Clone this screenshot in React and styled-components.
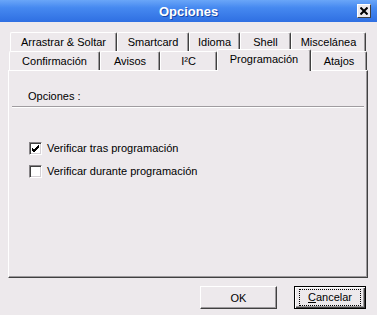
import React from 'react';
import styled, { createGlobalStyle } from 'styled-components';

const GlobalStyle = createGlobalStyle`
  html, body {
    margin: 0;
    padding: 0;
    background: #ede9ec;
  }
  body {
    font-family: 'Liberation Sans', Arial, sans-serif;
    font-size: 11px;
    color: #000;
  }
`;

const Window = styled.div`
  width: 377px;
  height: 315px;
  display: flex;
  flex-direction: column;
  background: #ede9ec;
  overflow: hidden;
`;

const TitleBar = styled.div`
  height: 22px;
  display: grid;
  grid-template-columns: 1fr auto 1fr;
  align-items: center;
  background: linear-gradient(#6aa6f8 0%, #4689f0 35%, #2f6fe2 100%);
`;

const Title = styled.div`
  grid-column: 2;
  color: #fff;
  font-weight: bold;
  font-size: 13px;
  text-shadow: 1px 1px 0 #1b47a8;
  padding-top: 1px;
`;

const CloseButton = styled.div`
  grid-column: 3;
  justify-self: end;
  margin-right: 6px;
  width: 14px;
  height: 14px;
  box-sizing: border-box;
  background: #ece9ec;
  border: 1px solid;
  border-color: #fff #404040 #404040 #fff;
  display: flex;
  align-items: center;
  justify-content: center;
`;

const Body = styled.div`
  padding: 10px 9px 0 8px;
  display: flex;
  flex-direction: column;
`;

const TabRow = styled.div`
  display: flex;
  height: 19px;
  margin-left: ${p => p.$indent}px;
  align-items: flex-end;
`;

const Tab = styled.div`
  width: ${p => p.$w}px;
  height: ${p => (p.$active ? 22 : 19)}px;
  margin-bottom: ${p => (p.$active ? -1 : 0)}px;
  box-sizing: border-box;
  border-top: 1px solid #fff;
  border-left: 1px solid #fff;
  border-right: 1px solid #404040;
  box-shadow: inset -1px 0 0 #9d9a9d;
  border-radius: 2px 2px 0 0;
  background: #ede9ec;
  display: flex;
  justify-content: center;
  align-items: flex-start;
  padding-top: 3px;
  white-space: nowrap;
  position: relative;
  z-index: ${p => (p.$active ? 2 : 1)};
`;

const Panel = styled.div`
  height: 208px;
  box-sizing: border-box;
  border-top: 1px solid #fff;
  border-left: 1px solid #fff;
  border-right: 1px solid #404040;
  border-bottom: 1px solid #404040;
  box-shadow: inset -1px -1px 0 #9d9a9d;
  padding: 19px 3px 0 3px;
  display: flex;
  flex-direction: column;
`;

const GroupLabel = styled.div`
  padding-left: 16px;
  line-height: 13px;
`;

const Separator = styled.div`
  height: 0;
  margin-top: 3px;
  border-top: 1px solid #a09ca0;
  border-bottom: 1px solid #fff;
`;

const Options = styled.div`
  margin-top: 34px;
  display: flex;
  flex-direction: column;
  gap: 10px;
  padding-left: 17px;
`;

const CheckRow = styled.label`
  display: flex;
  align-items: center;
  gap: 5px;
  line-height: 13px;
`;

const Box = styled.span`
  width: 13px;
  height: 13px;
  box-sizing: border-box;
  background: #fff;
  border: 1px solid;
  border-color: #878487 #fff #fff #878487;
  box-shadow: inset 1px 1px 0 #404040, inset -1px -1px 0 #d4d0d4;
  display: flex;
  align-items: center;
  justify-content: center;
`;

const ButtonBar = styled.div`
  display: flex;
  justify-content: flex-end;
  gap: 17px;
  padding: 8px 2px 0 0;
`;

const Button = styled.div`
  width: ${p => p.$w}px;
  height: 23px;
  box-sizing: border-box;
  background: #ede9ec;
  border: 1px solid;
  border-color: ${p => (p.$default ? '#000' : '#fff #404040 #404040 #fff')};
  box-shadow: ${p =>
    p.$default
      ? 'inset 1px 1px 0 #fff, inset -1px -1px 0 #404040, inset -2px -2px 0 #9d9a9d'
      : 'inset -1px -1px 0 #9d9a9d'};
  display: flex;
  align-items: center;
  justify-content: center;
`;

const Focus = styled.span`
  border: 1px dotted #000;
  padding: 1px 8px;
  line-height: 13px;
`;

const Check = () => (
  <svg width="9" height="9" viewBox="0 0 9 9">
    <path d="M1 4 L3 6 L8 1 M1 5 L3 7 L8 2 M1 6 L3 8 L8 3" stroke="#000" strokeWidth="1" fill="none" />
  </svg>
);

const row1 = [
  ['Arrastrar & Soltar', 107],
  ['Smartcard', 72],
  ['Idioma', 51],
  ['Shell', 51],
  ['Miscelánea', 75],
];

const row2 = [
  ['Confirmación', 91],
  ['Avisos', 60],
  ['I²C', 57],
  ['Programación', 94, true],
  ['Atajos', 56],
];

export default function App() {
  return (
    <Window>
      <GlobalStyle />
      <TitleBar>
        <Title>Opciones</Title>
        <CloseButton>
          <svg width="8" height="8" viewBox="0 0 8 8">
            <path d="M0.5 0.5 L7.5 7.5 M7.5 0.5 L0.5 7.5" stroke="#000" strokeWidth="2" />
          </svg>
        </CloseButton>
      </TitleBar>
      <Body>
        <TabRow $indent={2}>
          {row1.map(([t, w]) => (
            <Tab key={t} $w={w}>{t}</Tab>
          ))}
        </TabRow>
        <TabRow $indent={1}>
          {row2.map(([t, w, a]) => (
            <Tab key={t} $w={w} $active={a}>{t}</Tab>
          ))}
        </TabRow>
        <Panel>
          <GroupLabel>Opciones :</GroupLabel>
          <Separator />
          <Options>
            <CheckRow>
              <Box><Check /></Box>
              Verificar tras programación
            </CheckRow>
            <CheckRow>
              <Box />
              Verificar durante programación
            </CheckRow>
          </Options>
        </Panel>
        <ButtonBar>
          <Button $w={77}>OK</Button>
          <Button $w={72} $default>
            <Focus><u>C</u>ancelar</Focus>
          </Button>
        </ButtonBar>
      </Body>
    </Window>
  );
}
